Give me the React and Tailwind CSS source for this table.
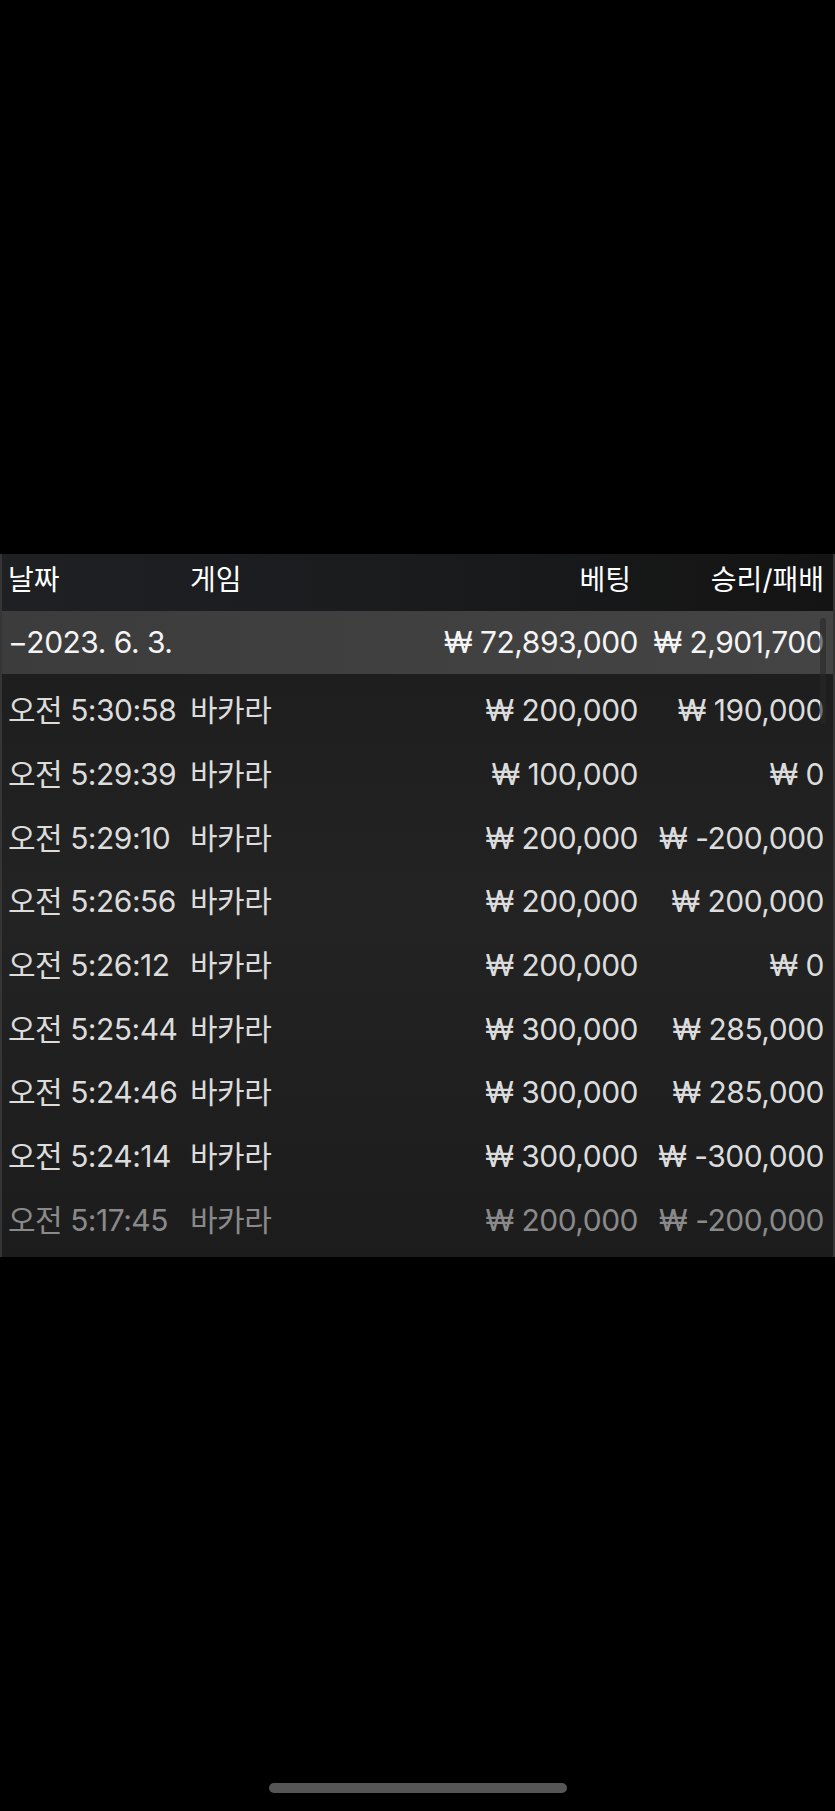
import React from "react";

const rows = [
  { time: "오전 5:30:58", game: "바카라", bet: "₩ 200,000", win: "₩ 190,000" },
  { time: "오전 5:29:39", game: "바카라", bet: "₩ 100,000", win: "₩ 0" },
  { time: "오전 5:29:10", game: "바카라", bet: "₩ 200,000", win: "₩ -200,000" },
  { time: "오전 5:26:56", game: "바카라", bet: "₩ 200,000", win: "₩ 200,000" },
  { time: "오전 5:26:12", game: "바카라", bet: "₩ 200,000", win: "₩ 0" },
  { time: "오전 5:25:44", game: "바카라", bet: "₩ 300,000", win: "₩ 285,000" },
  { time: "오전 5:24:46", game: "바카라", bet: "₩ 300,000", win: "₩ 285,000" },
  { time: "오전 5:24:14", game: "바카라", bet: "₩ 300,000", win: "₩ -300,000" },
  { time: "오전 5:17:45", game: "바카라", bet: "₩ 200,000", win: "₩ -200,000", faded: true },
];

const font = { fontFamily: "Inter, 'Noto Sans CJK KR', sans-serif" };

function Row({ r }) {
  return (
    <div
      className={`flex h-[63.7px] items-center pl-[6px] pr-[9px] text-[30px] tracking-[-0.5px] ${
        r.faded ? "text-[#8a8a8a]" : "text-[#dcdcdc]"
      }`}
    >
      <span className="w-[182px] whitespace-nowrap">{r.time}</span>
      <span className="flex-1 whitespace-nowrap">{r.game}</span>
      <span className="whitespace-nowrap text-right">{r.bet}</span>
      <span className="w-[186px] whitespace-nowrap text-right">{r.win}</span>
    </div>
  );
}

export default function App() {
  return (
    <main className="min-h-[1811px] bg-black flex flex-col" style={font}>
      <div className="h-[554px]" />

      <section className="relative h-[703px] border-x-2 border-[#353535] bg-gradient-to-b from-[#1b1b1b] via-[#232323] to-[#1c1c1c]">
        <header className="flex h-[57px] items-center pb-[6px] pl-[6px] pr-[9px] text-[28px] text-white bg-gradient-to-r from-[#1e2024] via-[#1a1b1d] to-[#141414]">
          <span className="w-[182px]">날짜</span>
          <span className="flex-1">게임</span>
          <span className="pr-[7px]">베팅</span>
          <span className="w-[186px] text-right">승리/패배</span>
        </header>

        <div className="flex h-[63px] items-center pl-[6px] pr-[9px] text-[30px] tracking-[-0.5px] text-[#f4f4f4] bg-gradient-to-r from-[#3c3c3c] to-[#444444]">
          <span className="flex-1 whitespace-nowrap">−2023. 6. 3.</span>
          <span className="whitespace-nowrap text-right">₩ 72,893,000</span>
          <span className="w-[186px] whitespace-nowrap text-right">₩ 2,901,700</span>
        </div>

        <div className="pt-[5px]">
          {rows.map((r, i) => (
            <Row key={i} r={r} />
          ))}
        </div>

        <div className="absolute left-[818px] top-[64px] h-[106px] w-[6px] rounded-full bg-[#282828]/60" />
      </section>

      <div className="flex flex-1 items-end justify-center pb-[18px]">
        <div className="h-[10px] w-[298px] rounded-full bg-[#555555]" />
      </div>
    </main>
  );
}
